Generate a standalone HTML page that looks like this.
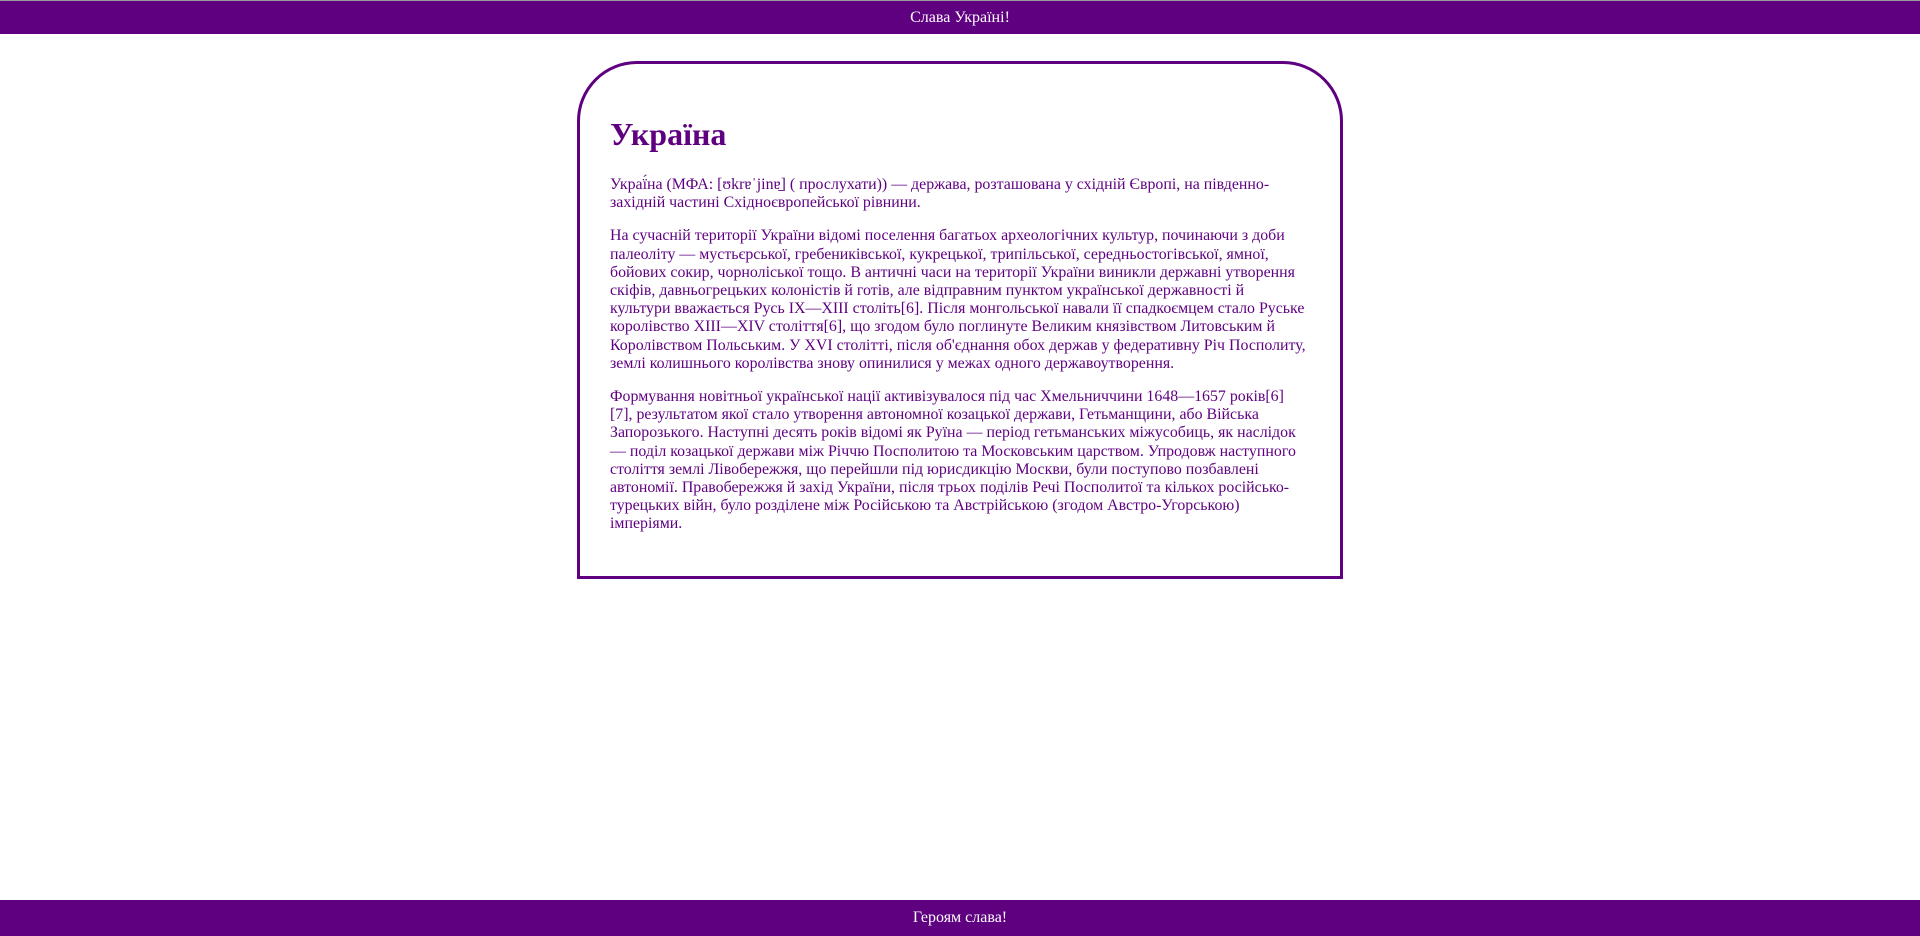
<!DOCTYPE html>
<html><head><meta charset="utf-8"><style>
html,body{margin:0;padding:0;background:#fff;}
body{font-family:"Liberation Serif",serif;width:1920px;height:936px;position:relative;overflow:hidden;}
.top{position:absolute;top:0;left:0;width:1920px;height:34px;background:#5f0080;border-top:1px solid #9a9a9a;box-sizing:border-box;color:#fff;text-align:center;font-size:16px;line-height:33px;}
.bot{position:absolute;top:900px;left:0;width:1920px;height:36px;background:#5f0080;color:#fff;text-align:center;font-size:16px;line-height:36px;}
.box{position:absolute;left:577px;top:61px;width:766px;height:518px;box-sizing:border-box;border:3px solid #5f0080;border-radius:60px 60px 0 0;padding:0 20px 0 30px;color:#5f0080;}
h1{font-size:32px;margin:52px 0 24px;line-height:36px;}
p{font-size:15.9px;line-height:18.2px;margin:0 0 15px;white-space:nowrap;}
</style></head><body>
<div class="top">Слава Україні!</div>
<div class="box">
<h1>Україна</h1>
<p>Украї́на (МФА: [ʊkrɐˈjinɐ̠] ( прослухати)) — держава, розташована у східній Європі, на південно-<br>західній частині Східноєвропейської рівнини.</p>
<p>На сучасній території України відомі поселення багатьох археологічних культур, починаючи з доби<br>палеоліту — мустьєрської, гребениківської, кукрецької, трипільської, середньостогівської, ямної,<br>бойових сокир, чорноліської тощо. В античні часи на території України виникли державні утворення<br>скіфів, давньогрецьких колоністів й готів, але відправним пунктом української державності й<br>культури вважається Русь IX—XIII століть[6]. Після монгольської навали її спадкоємцем стало Руське<br>королівство XIII—XIV століття[6], що згодом було поглинуте Великим князівством Литовським й<br>Королівством Польським. У XVI столітті, після об'єднання обох держав у федеративну Річ Посполиту,<br>землі колишнього королівства знову опинилися у межах одного державоутворення.</p>
<p>Формування новітньої української нації активізувалося під час Хмельниччини 1648—1657 років[6]<br>[7], результатом якої стало утворення автономної козацької держави, Гетьманщини, або Війська<br>Запорозького. Наступні десять років відомі як Руїна — період гетьманських міжусобиць, як наслідок<br>— поділ козацької держави між Річчю Посполитою та Московським царством. Упродовж наступного<br>століття землі Лівобережжя, що перейшли під юрисдикцію Москви, були поступово позбавлені<br>автономії. Правобережжя й захід України, після трьох поділів Речі Посполитої та кількох російсько-<br>турецьких війн, було розділене між Російською та Австрійською (згодом Австро-Угорською)<br>імперіями.</p>
</div>
<div class="bot">Героям слава!</div>
</body></html>
